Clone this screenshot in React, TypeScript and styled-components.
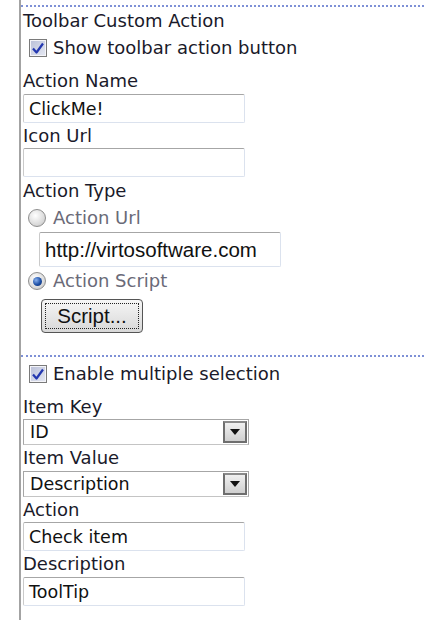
import React from "react";
import styled, { createGlobalStyle } from "styled-components";

const GlobalStyle = createGlobalStyle`
  html, body {
    margin: 0;
    padding: 0;
    background: #fff;
  }
  body {
    font-family: "DejaVu Sans", Verdana, sans-serif;
    font-size: 18px;
    color: #1a1a2a;
  }
`;

const Panel = styled.div`
  margin-left: 19px;
  border-left: 2px solid #a3a3a3;
  min-height: 620px;
  padding-top: 5px;
  box-sizing: border-box;
`;

const Section = styled.div`
  border-top: 2px dotted #7e90d6;
  padding: 4px 0 0 2px;
  display: flex;
  flex-direction: column;
`;

const Label = styled.div<{ $top?: number }>`
  line-height: 20px;
  margin-top: ${(p) => p.$top ?? 0}px;
`;

const CheckRow = styled.label<{ $top?: number }>`
  display: flex;
  align-items: center;
  gap: 6px;
  margin: ${(p) => p.$top ?? 0}px 0 0 6px;
  height: 20px;
  line-height: 20px;
`;

const CheckBox = styled.span`
  width: 16px;
  height: 16px;
  border: 1px solid #7a7a7a;
  background: linear-gradient(135deg, #b9bfd8 0%, #e6e9f3 100%);
  box-shadow: inset 0 0 0 1px #f4f4f8;
  display: flex;
  align-items: center;
  justify-content: center;
`;

const RadioRow = styled.label<{ $top?: number }>`
  display: flex;
  align-items: center;
  gap: 7px;
  margin: ${(p) => p.$top ?? 0}px 0 0 5px;
  height: 20px;
  line-height: 18px;
  color: #6a6a78;
`;

const Radio = styled.span<{ $checked?: boolean }>`
  width: 16px;
  height: 16px;
  border-radius: 50%;
  border: 1px solid #8e8e8e;
  background: radial-gradient(circle at 40% 35%, #ffffff 0%, #d9d9d9 65%, #b8b8b8 100%);
  display: flex;
  align-items: center;
  justify-content: center;
  &::after {
    content: "";
    display: ${(p) => (p.$checked ? "block" : "none")};
    width: 9px;
    height: 9px;
    border-radius: 50%;
    background: radial-gradient(circle at 35% 35%, #8ab2ee 0%, #1d4fa6 55%, #0b2760 100%);
  }
`;

const TextBox = styled.div<{ $width?: number; $height?: number; $left?: number; $top?: number; $url?: boolean }>`
  box-sizing: border-box;
  width: ${(p) => p.$width ?? 222}px;
  height: ${(p) => p.$height ?? 29}px;
  margin: ${(p) => p.$top ?? 0}px 0 0 ${(p) => p.$left ?? 0}px;
  border: 1px solid #cacaca;
  border-top-color: #a6a6a6;
  border-bottom-color: #dbe2ee;
  border-right-color: #dbe2ee;
  border-radius: 2px;
  background: #fff;
  padding: 0 5px;
  display: flex;
  align-items: center;
  font-family: ${(p) => (p.$url ? '"Liberation Sans", Arial, sans-serif' : '"DejaVu Sans", Verdana, sans-serif')};
  font-size: ${(p) => (p.$url ? 20.5 : 17.5)}px;
  color: #111;
  white-space: nowrap;
`;

const Button = styled.div`
  box-sizing: border-box;
  width: 102px;
  height: 34px;
  margin: 8px 0 0 18px;
  border: 1px solid #555;
  border-radius: 4px;
  background: linear-gradient(#f6f6f6, #d8d8d8);
  padding: 3px;
  display: flex;
`;

const ButtonInner = styled.div`
  flex: 1;
  border: 1px dotted #222;
  display: flex;
  align-items: center;
  justify-content: center;
  font-family: "Liberation Sans", Arial, sans-serif;
  font-size: 20.5px;
  color: #111;
`;

const Select = styled.div<{ $top?: number }>`
  box-sizing: border-box;
  width: 226px;
  height: 26px;
  margin-top: ${(p) => p.$top ?? 0}px;
  border: 1px solid #a6a6a6;
  border-bottom-color: #c4c4c4;
  display: flex;
  align-items: stretch;
  background: #fff;
`;

const SelectText = styled.div`
  flex: 1;
  display: flex;
  align-items: center;
  padding-left: 6px;
  font-size: 17.5px;
  color: #111;
`;

const Arrow = styled.div`
  width: 24px;
  margin: 1px;
  border: 2px solid #6e6e6e;
  border-top-color: #8a8a8a;
  background: linear-gradient(#f0f0f0, #cfcfcf);
  display: flex;
  align-items: center;
  justify-content: center;
  box-sizing: border-box;
`;

const Spacer = styled.div`
  height: 22px;
`;

const Check = () => (
  <svg width="14" height="14" viewBox="0 0 14 14">
    <path d="M2 7.5 L5.5 11.5 L12 2.5" fill="none" stroke="#2438b0" strokeWidth="2.2" strokeLinejoin="round" />
  </svg>
);

const Tri = () => (
  <svg width="10" height="6" viewBox="0 0 10 6">
    <path d="M0 0 H10 L5 6 Z" fill="#111" />
  </svg>
);

export default function App() {
  return (
    <>
      <GlobalStyle />
      <Panel>
        <Section>
          <Label>Toolbar Custom Action</Label>
          <CheckRow $top={7}>
            <CheckBox>
              <Check />
            </CheckBox>
            Show toolbar action button
          </CheckRow>
          <Label $top={13}>Action Name</Label>
          <TextBox $top={3}>ClickMe!</TextBox>
          <Label $top={3}>Icon Url</Label>
          <TextBox $top={2}></TextBox>
          <Label $top={4}>Action Type</Label>
          <RadioRow $top={7}>
            <Radio />
            Action Url
          </RadioRow>
          <TextBox $top={4} $left={16} $width={242} $height={35} $url>
            http://virtosoftware.com
          </TextBox>
          <RadioRow $top={4}>
            <Radio $checked />
            Action Script
          </RadioRow>
          <Button>
            <ButtonInner>Script...</ButtonInner>
          </Button>
          <Spacer />
        </Section>
        <Section>
          <CheckRow $top={3}>
            <CheckBox>
              <Check />
            </CheckBox>
            Enable multiple selection
          </CheckRow>
          <Label $top={13}>Item Key</Label>
          <Select $top={2}>
            <SelectText>ID</SelectText>
            <Arrow>
              <Tri />
            </Arrow>
          </Select>
          <Label $top={3}>Item Value</Label>
          <Select $top={3}>
            <SelectText>Description</SelectText>
            <Arrow>
              <Tri />
            </Arrow>
          </Select>
          <Label $top={3}>Action</Label>
          <TextBox $top={2}>Check item</TextBox>
          <Label $top={3}>Description</Label>
          <TextBox $top={3}>ToolTip</TextBox>
        </Section>
      </Panel>
    </>
  );
}
